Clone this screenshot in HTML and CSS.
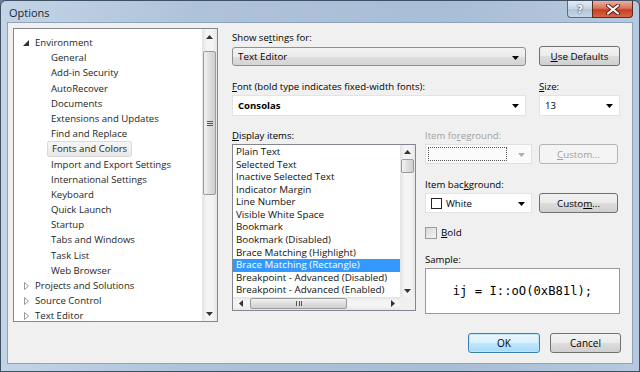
FILE: index.html
```html
<!DOCTYPE html>
<html lang="en">
<head>
  <meta charset="UTF-8" />
  <title>Options</title>
  <link rel="stylesheet" href="styles.css">
</head>
<body>
  <div class="window">
    <div class="titlebar">
      <span class="title">Options</span>
      <div class="caption-btns">
        <div class="cap-help">?</div>
        <div class="cap-close">
          <svg width="14" height="11" viewBox="0 0 14 11"><path d="M2 1.5 L12 9.5 M12 1.5 L2 9.5" stroke="#5a1a10" stroke-width="4" stroke-linecap="round"/><path d="M2 1.5 L12 9.5 M12 1.5 L2 9.5" stroke="#fff" stroke-width="2.2" stroke-linecap="round"/></svg>
        </div>
      </div>
    </div>

    <div class="client">
      <div class="main">
        <div class="tree">
          <div class="tree-items">
            <div class="node"><svg class="exp" width="6" height="6" viewBox="0 0 6 6"><polygon points="6,0 6,6 0,6" fill="#333"/></svg>Environment</div>
            <div class="leaf">General</div>
            <div class="leaf">Add-in Security</div>
            <div class="leaf">AutoRecover</div>
            <div class="leaf">Documents</div>
            <div class="leaf">Extensions and Updates</div>
            <div class="leaf">Find and Replace</div>
            <div class="leaf"><span class="picked">Fonts and Colors</span></div>
            <div class="leaf">Import and Export Settings</div>
            <div class="leaf">International Settings</div>
            <div class="leaf">Keyboard</div>
            <div class="leaf">Quick Launch</div>
            <div class="leaf">Startup</div>
            <div class="leaf">Tabs and Windows</div>
            <div class="leaf">Task List</div>
            <div class="leaf">Web Browser</div>
            <div class="node"><svg class="col" width="5" height="8" viewBox="0 0 5 8"><polygon points="0.5,0.5 4.5,4 0.5,7.5" fill="none" stroke="#999"/></svg>Projects and Solutions</div>
            <div class="node"><svg class="col" width="5" height="8" viewBox="0 0 5 8"><polygon points="0.5,0.5 4.5,4 0.5,7.5" fill="none" stroke="#999"/></svg>Source Control</div>
            <div class="node"><svg class="col" width="5" height="8" viewBox="0 0 5 8"><polygon points="0.5,0.5 4.5,4 0.5,7.5" fill="none" stroke="#999"/></svg>Text Editor</div>
          </div>
          <div class="vscroll">
            <div class="sb-btn"><svg width="7" height="4" viewBox="0 0 7 4"><polygon points="0,4 3.5,0 7,4" fill="#333"/></svg></div>
            <div class="sb-thumb tall"><span class="grip"></span></div>
            <div class="sb-track"></div>
            <div class="sb-btn"><svg width="7" height="4" viewBox="0 0 7 4"><polygon points="0,0 7,0 3.5,4" fill="#333"/></svg></div>
          </div>
        </div>

        <div class="panel">
          <div class="top">
            <div class="lbl">Show se<u>t</u>tings for:</div>
            <div></div>
            <div class="combo button-combo">Text Editor<svg class="arrow" width="7" height="4" viewBox="0 0 7 4"><polygon points="0,0 7,0 3.5,4" fill="#000"/></svg></div>
            <div class="btn"><u>U</u>se Defaults</div>
            <div class="lbl gap"><u>F</u>ont (bold type indicates fixed-width fonts):</div>
            <div class="lbl gap"><u>S</u>ize:</div>
            <div class="combo white bold">Consolas<svg class="arrow" width="7" height="4" viewBox="0 0 7 4"><polygon points="0,0 7,0 3.5,4" fill="#000"/></svg></div>
            <div class="combo white">13<svg class="arrow" width="7" height="4" viewBox="0 0 7 4"><polygon points="0,0 7,0 3.5,4" fill="#000"/></svg></div>
          </div>

          <div class="lower">
            <div class="items-col">
              <div class="lbl"><u>D</u>isplay items:</div>
              <div class="listbox">
                <div class="list-rows">
                  <div class="row">Plain Text</div>
                  <div class="row">Selected Text</div>
                  <div class="row">Inactive Selected Text</div>
                  <div class="row">Indicator Margin</div>
                  <div class="row">Line Number</div>
                  <div class="row">Visible White Space</div>
                  <div class="row">Bookmark</div>
                  <div class="row">Bookmark (Disabled)</div>
                  <div class="row">Brace Matching (Highlight)</div>
                  <div class="row sel">Brace Matching (Rectangle)</div>
                  <div class="row">Breakpoint - Advanced (Disabled)</div>
                  <div class="row">Breakpoint - Advanced (Enabled)</div>
                </div>
                <div class="vscroll small">
                  <div class="sb-btn"><svg width="7" height="4" viewBox="0 0 7 4"><polygon points="0,4 3.5,0 7,4" fill="#333"/></svg></div>
                  <div class="sb-thumb short"></div>
                  <div class="sb-track"></div>
                  <div class="sb-btn"><svg width="7" height="4" viewBox="0 0 7 4"><polygon points="0,0 7,0 3.5,4" fill="#333"/></svg></div>
                </div>
                <div class="hscroll">
                  <div class="sb-btn"><svg width="4" height="7" viewBox="0 0 4 7"><polygon points="4,0 4,7 0,3.5" fill="#333"/></svg></div>
                  <div class="sb-thumb wide"><span class="hgrip"></span></div>
                  <div class="sb-track"></div>
                  <div class="sb-btn"><svg width="4" height="7" viewBox="0 0 4 7"><polygon points="0,0 4,3.5 0,7" fill="#333"/></svg></div>
                </div>
                <div class="corner"></div>
              </div>
            </div>

            <div class="props-col">
              <div class="lbl dim">Item fo<u>r</u>eground:</div>
              <div class="pair">
                <div class="combo disabled"><span class="focus-rect"></span><svg class="arrow" width="7" height="4" viewBox="0 0 7 4"><polygon points="0,0 7,0 3.5,4" fill="#b0b0b0"/></svg></div>
                <div class="btn off"><u>C</u>ustom...</div>
              </div>
              <div class="lbl gap">Item bac<u>k</u>ground:</div>
              <div class="pair">
                <div class="combo white"><span class="swatch"></span>White<svg class="arrow" width="7" height="4" viewBox="0 0 7 4"><polygon points="0,0 7,0 3.5,4" fill="#000"/></svg></div>
                <div class="btn">Custo<u>m</u>...</div>
              </div>
              <div class="check"><span class="box"></span><u>B</u>old</div>
              <div class="lbl sample-lbl">Sample:</div>
              <div class="sample">ij = I::oO(0xB81l);</div>
            </div>
          </div>
        </div>
      </div>

      <div class="actions">
        <div class="btn dlg default">OK</div>
        <div class="btn dlg">Cancel</div>
      </div>
    </div>
  </div>
</body>
</html>
```

FILE: styles.css
```css
* { margin: 0; padding: 0; box-sizing: border-box; }
body {
  width: 640px;
  height: 372px;
  overflow: hidden;
  font-family: "Open Sans", "Noto Sans", sans-serif;
  font-size: 9.6px;
  color: #000;
  background: #6b7d90;
}
u { text-decoration: underline; text-underline-offset: 1px; }

/* window chrome */
.window {
  width: 640px;
  height: 372px;
  border: 1px solid #3f5064;
  border-radius: 6px 6px 0 0;
  background: linear-gradient(to right, #c3d4e6 0%, #aec3da 30%, #a8bed6 70%, #b6c9de 100%);
  padding: 0 6px 7px;
  display: flex;
  flex-direction: column;
}
.titlebar {
  height: 22px;
  display: flex;
  align-items: flex-start;
  justify-content: space-between;
}
.title {
  font-size: 11px;
  color: #1b2633;
  padding: 4px 0 0 2px;
}
.caption-btns { display: flex; }
.cap-help, .cap-close {
  height: 17px;
  display: flex;
  align-items: center;
  justify-content: center;
  border: 1px solid #5b6d82;
  border-top: none;
}
.cap-help {
  width: 25px;
  border-radius: 0 0 0 4px;
  border-right: none;
  background: linear-gradient(#e3ebf4, #c6d4e3 50%, #b2c3d7 51%, #c6d6e8);
  color: #fff;
  font-family: "DejaVu Sans", sans-serif;
  font-weight: bold;
  font-size: 11px;
  text-shadow: 0 0 2px #33475c, 0 0 1px #33475c;
}
.cap-close {
  width: 41px;
  border-radius: 0 0 4px 0;
  background: linear-gradient(#eab1a4, #d9735c 45%, #c5401f 55%, #d8664a);
  border-color: #5d2a1e;
}

.client {
  flex: 1;
  background: #f0f0f0;
  border: 1px solid #8ea3ba;
  padding: 5px 11px 10px 5px;
  display: flex;
  flex-direction: column;
}
.main {
  display: flex;
  gap: 14px;
}

/* tree */
.tree {
  width: 205px;
  height: 294px;
  border: 1px solid #828790;
  background: #fff;
  display: flex;
}
.tree-items {
  flex: 1;
  padding-top: 6px;
  font-size: 9.6px;
  color: #1e1e1e;
}
.node, .leaf {
  height: 15.2px;
  line-height: 15.2px;
  white-space: nowrap;
}
.node { padding-left: 9px; display: flex; align-items: center; }
.node svg { margin-right: 6px; flex: none; }
.node .col { margin-left: 1px; margin-right: 6px; }
.leaf { padding-left: 37px; }
.picked {
  display: inline-block;
  padding: 0 4px;
  margin-left: -4px;
  border: 1px solid #dadada;
  border-radius: 2px;
  background: linear-gradient(#f6f6f6, #e8e8e8);
  line-height: 14px;
}

/* scrollbars */
.vscroll {
  width: 15px;
  display: flex;
  flex-direction: column;
  background: linear-gradient(to right, #e3e3e3, #f4f4f4 30%, #f4f4f4 70%, #e6e6e6);
}
.hscroll {
  height: 13px;
  display: flex;
  background: linear-gradient(#e3e3e3, #f4f4f4 30%, #f4f4f4 70%, #e6e6e6);
}
.sb-btn {
  flex: none;
  width: 15px;
  height: 15px;
  display: flex;
  align-items: center;
  justify-content: center;
}
.small .sb-btn { height: 13px; }
.hscroll .sb-btn { width: 15px; height: 13px; }
.sb-track { flex: 1; }
.sb-thumb {
  flex: none;
  border: 1px solid #9a9a9a;
  border-radius: 2px;
  background: linear-gradient(to right, #f2f2f2, #dedede 50%, #cfcfcf);
  display: flex;
  align-items: center;
  justify-content: center;
}
.vscroll .sb-thumb { margin: 1px 1px 0; }
.sb-thumb.tall { height: 144px; margin-top: 7px; }
.sb-thumb.short { height: 14px; }
.sb-thumb.wide {
  width: 97px;
  margin: 1px 0 1px 2px;
  background: linear-gradient(#f2f2f2, #dedede 50%, #cfcfcf);
}
.grip {
  width: 6px;
  height: 5px;
  border-top: 1px solid #555;
  border-bottom: 1px solid #555;
}
.grip::after {
  content: "";
  display: block;
  margin-top: 1px;
  border-top: 1px solid #555;
}
.hgrip {
  width: 6px;
  height: 5px;
  border-left: 1px solid #555;
  border-right: 1px solid #555;
  background: linear-gradient(to right, transparent 2px, #555 2px, #555 3px, transparent 3px);
}

/* right panel */
.panel {
  width: 388px;
  padding-top: 3px;
  display: flex;
  flex-direction: column;
}
.lbl {
  height: 13px;
  line-height: 13px;
  white-space: nowrap;
}
.lbl.dim { color: #a0a0a0; }
.top {
  display: grid;
  grid-template-columns: 294px 81px;
  column-gap: 13px;
  row-gap: 2px;
}
.top .lbl.gap { margin-top: 12px; }
.combo {
  position: relative;
  height: 21px;
  display: flex;
  align-items: center;
  padding-left: 5px;
  border: 1px solid #e0e0e0;
  white-space: nowrap;
}
.combo .arrow { position: absolute; right: 6px; top: 8px; }
.combo.white { background: #fff; border-color: #e3e3e3; }
.combo.bold { font-weight: bold; }
.button-combo {
  height: 19px;
  margin-top: 1px;
  border: 1px solid #8e8f8f;
  border-radius: 3px;
  background: linear-gradient(#f3f3f3, #ececec 50%, #dedede 51%, #d4d4d4);
  font-size: 9.8px;
}
.btn {
  height: 20px;
  display: flex;
  align-items: center;
  justify-content: center;
  border: 1px solid #707070;
  border-radius: 3px;
  background: linear-gradient(#f2f2f2, #ebebeb 50%, #dddddd 51%, #cfcfcf);
  white-space: nowrap;
  font-size: 9.8px;
}
.btn.off {
  color: #a0a0a0;
  border-color: #b5b5b5;
  background: #f4f4f4;
}

/* lower section */
.lower {
  margin-top: 13px;
  display: flex;
  gap: 9px;
}
.items-col { width: 184px; display: flex; flex-direction: column; }
.listbox {
  margin-top: 2px;
  height: 167px;
  border: 1px solid #828790;
  background: #fff;
  display: grid;
  grid-template-columns: 1fr 15px;
  grid-template-rows: 1fr 13px;
}
.list-rows { padding-top: 1px; overflow: hidden; }
.row {
  height: 12.58px;
  line-height: 12.58px;
  padding-left: 3px;
  white-space: nowrap;
  font-size: 9.8px;
  color: #111;
}
.row.sel { background: #3399ff; color: #fff; }
.corner { background: #f0f0f0; }

.props-col { width: 195px; display: flex; flex-direction: column; }
.pair {
  margin-top: 2px;
  display: flex;
  gap: 7px;
  align-items: center;
}
.pair .combo { width: 107px; height: 20px; }
.pair .btn { width: 79px; }
.props-col .lbl.gap { margin-top: 14px; }
.combo.disabled { background: #fbfbfb; padding: 2px; }
.focus-rect {
  width: 79px;
  height: 14px;
  border: 1px dotted #555;
}
.swatch {
  width: 11px;
  height: 11px;
  border: 1px solid #222;
  background: #fff;
  margin-right: 4px;
}
.check {
  margin-top: 13px;
  height: 13px;
  display: flex;
  align-items: center;
  font-size: 9.8px;
}
.check .box {
  width: 12px;
  height: 12px;
  border: 1px solid #9a9a9a;
  background: linear-gradient(135deg, #d8d8d8, #f4f4f4);
  margin-right: 4px;
}
.sample-lbl { margin-top: 14px; }
.sample {
  margin-top: 2px;
  height: 46px;
  border: 1px solid #9a9a9a;
  background: #fff;
  display: flex;
  align-items: center;
  justify-content: center;
  font-family: "DejaVu Sans Mono", "Liberation Mono", monospace;
  font-size: 12.2px;
}

/* dialog buttons */
.actions {
  margin-top: 11px;
  display: flex;
  justify-content: flex-end;
  gap: 10px;
}
.btn.dlg { width: 71px; font-size: 10px; }
.btn.default {
  width: 72px;
  border-color: #3c7fb1;
  background: linear-gradient(#eaf6fd, #d9f0fc 50%, #bee6fd 51%, #a7d9f5);
  box-shadow: inset 0 0 0 1px #c2e5f9;
}
```
